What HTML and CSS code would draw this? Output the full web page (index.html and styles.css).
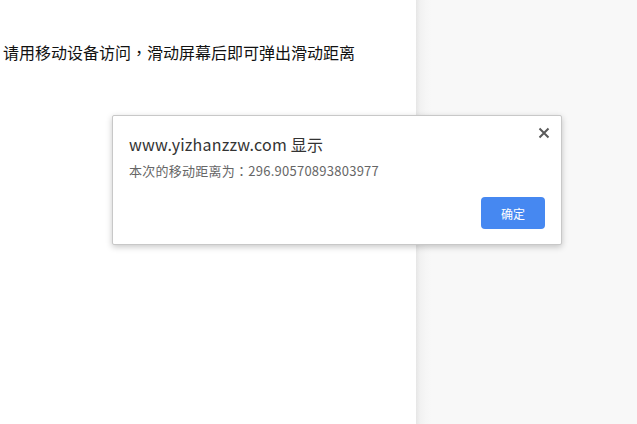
FILE: index.html
```html
<!DOCTYPE html>
<html lang="zh-CN">
<head>
<meta charset="utf-8">
<title>滑动距离</title>
<link rel="stylesheet" href="styles.css">
</head>
<body>
<div class="layout">
  <main class="page">
    <p class="hint">请用移动设备访问<span class="punct" lang="zh-TW">，</span>滑动屏幕后即可弹出滑动距离</p>
  </main>
  <aside class="side"></aside>
</div>
<div class="dialog" role="alertdialog">
  <button class="close" aria-label="关闭">
    <svg width="12" height="12" viewBox="0 0 12 12"><path d="M1.5 1.5 L10.5 10.5 M10.5 1.5 L1.5 10.5" stroke="#5a5a5a" stroke-width="2" fill="none"/></svg>
  </button>
  <div class="dialog-title">www.yizhanzzw.com 显示</div>
  <div class="dialog-msg">本次的移动距离为<span class="punct" lang="zh-TW">：</span>296.90570893803977</div>
  <div class="dialog-actions">
    <button class="ok">确定</button>
  </div>
</div>
</body>
</html>
```

FILE: styles.css
```css
html, body {
  margin: 0;
  padding: 0;
  height: 100%;
}
body {
  font-family: "Noto Sans CJK SC", "Noto Sans", sans-serif;
  background: #fff;
  overflow: hidden;
}
.layout {
  display: flex;
  height: 424px;
}
.page {
  width: 416px;
  background: #fff;
  flex: none;
}
.hint {
  margin: 0;
  padding: 42px 0 0 3px;
  font-size: 16px;
  line-height: 20px;
  color: #111;
  white-space: nowrap;
}
.punct {
  font-family: "Noto Sans CJK TC", "Noto Sans CJK SC", sans-serif;
}
.side {
  flex: 1;
  background: linear-gradient(to right, #e6e6e6 0px, #f1f1f1 4px, #f6f6f6 10px, #f8f8f8 16px);
}
.dialog {
  position: absolute;
  left: 112px;
  top: 115px;
  width: 448px;
  height: 128px;
  background: #fff;
  border: 1px solid #c8c8c8;
  border-radius: 2px;
  box-shadow: 0 2px 6px rgba(0,0,0,0.22);
  padding: 0;
  box-sizing: content-box;
  display: flex;
  flex-direction: column;
}
.close {
  position: absolute;
  right: 10px;
  top: 10px;
  width: 14px;
  height: 14px;
  padding: 1px;
  border: 0;
  background: none;
  display: flex;
  align-items: center;
  justify-content: center;
}
.dialog-title {
  margin: 18px 16px 0 16px;
  font-size: 16px;
  line-height: 20px;
  letter-spacing: 0.2px;
  color: #333;
}
.dialog-msg {
  margin: 8px 16px 0 16px;
  font-size: 13px;
  line-height: 18px;
  letter-spacing: 0.25px;
  color: #666;
}
.dialog-actions {
  display: flex;
  justify-content: flex-end;
  margin: 17px 16px 0 16px;
}
.ok {
  width: 64px;
  height: 32px;
  border: 0;
  border-radius: 4px;
  background: #4688f1;
  color: #fff;
  font-family: "Noto Sans CJK SC", sans-serif;
  font-size: 12px;
  padding: 0;
}
```
